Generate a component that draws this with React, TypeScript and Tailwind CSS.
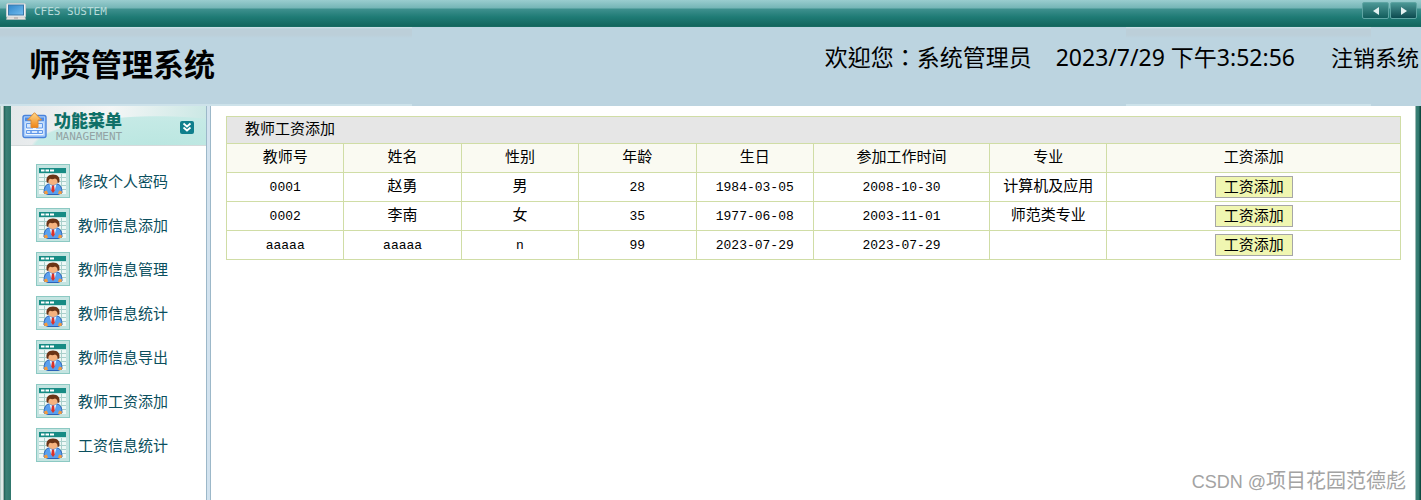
import React from 'react'

const menuItems = [
  '修改个人密码',
  '教师信息添加',
  '教师信息管理',
  '教师信息统计',
  '教师信息导出',
  '教师工资添加',
  '工资信息统计',
]

const columns = [
  { title: '教师号', width: 'w-[10%]' },
  { title: '姓名', width: 'w-[10%]' },
  { title: '性别', width: 'w-[10%]' },
  { title: '年龄', width: 'w-[10%]' },
  { title: '生日', width: 'w-[10%]' },
  { title: '参加工作时间', width: 'w-[15%]' },
  { title: '专业', width: 'w-[10%]' },
  { title: '工资添加', width: 'w-1/4' },
]

const teachers = [
  ['0001', '赵勇', '男', '28', '1984-03-05', '2008-10-30', '计算机及应用'],
  ['0002', '李南', '女', '35', '1977-06-08', '2003-11-01', '师范类专业'],
  ['aaaaa', 'aaaaa', 'n', '99', '2023-07-29', '2023-07-29', ''],
]

const MonitorIcon = () => (
  <svg width="20" height="17" viewBox="0 0 20 17" aria-hidden="true">
    <defs>
      <linearGradient id="screen" x1="0" y1="0" x2="1" y2="1">
        <stop offset="0" stopColor="#2f86c9" />
        <stop offset="1" stopColor="#74bdf0" />
      </linearGradient>
    </defs>
    <rect x="0.5" y="0.5" width="19" height="14" rx="1.5" fill="#eef1f2" stroke="#c4cdd0" />
    <rect x="2.5" y="2" width="15" height="10" fill="url(#screen)" stroke="#3b78a8" />
    <path d="M1 14h18l.5 2.5H.5z" fill="#e6e2e0" stroke="#b7bfc1" strokeWidth="0.6" />
    <path d="M8 15h4" stroke="#a39a98" />
  </svg>
)

const ManagementIcon = () => (
  <svg width="26" height="28" viewBox="0 0 26 28" aria-hidden="true">
    <defs>
      <linearGradient id="arrow" x1="0" y1="0" x2="0" y2="1">
        <stop offset="0" stopColor="#ffd98a" />
        <stop offset="1" stopColor="#ee8418" />
      </linearGradient>
    </defs>
    <rect x="1" y="3.500" width="23" height="22" rx="2" fill="#a9cdfa" stroke="#4a83dc" strokeWidth="1.4" />
    <path d="M3 5.500h19v3.500H3z" fill="#4f8de6" />
    <path d="M3.500 10.500h18v12.500h-18z" fill="#f1f7ff" />
    <path d="M4.500 11.500h6.500v4.500H4.500zM14 11.500h6.500v4.500H14zM4.500 18.500h4.500v3H4.500zM9 18.500h7v3H9zM16 18.500h4.500v3H16z" fill="#d7e8fd" stroke="#6299ea" />
    <path d="M12.500 .7l7 7.300H16v7.500H9V8H5.500z" fill="url(#arrow)" stroke="#dd8a35" />
  </svg>
)

const TeacherIcon = () => (
  <svg width="34" height="34" viewBox="0 0 34 34" aria-hidden="true" className="shrink-0">
    <rect x="0.5" y="0.5" width="33" height="33" fill="#c4e4e1" stroke="#8cc9c3" />
    <rect x="3" y="4" width="27" height="5" fill="#168b84" />
    <path d="M5 6.500h3.500M9.500 6.500H13M14 6.500h4" stroke="#fff" strokeWidth="2" />
    <path d="M3 10h27v20H3z" fill="#eef8f6" />
    <path d="M3 13.500h27M3 17.500h27M3 21.500h27M3 25.500h27M8.500 10v20M25.500 10v20" stroke="#a9cfcb" />
    <path d="M8 29c0-5 1.500-8.500 5-9h8c3.500 .5 5 4 5 9l-4 1.500H12z" fill="#5aa0ee" stroke="#2b62b8" />
    <path d="M13.500 20l3.500 2.500 3.500-2.500-2 7h-3z" fill="#e9f2fd" />
    <path d="M16 21.500h2l.8 5L17 29l-1.800-2.500z" fill="#d8322b" />
    <ellipse cx="17" cy="16.500" rx="5" ry="4.500" fill="#f6b27e" />
    <path d="M10.800 18.500C9.500 13.500 12 10.500 17 10.500s7.500 3 6.200 8l-1.700 .5c.3-3-1-4-2.500-4.500-1.500 .8-3.500 .8-5 .3-1.200 .7-1.800 2-1.500 4.200z" fill="#6b3416" />
    <path d="M8 27.500l3-1 1 3.500H8.500zM26 27.500l-3-1-1 3.500h3.500z" fill="#f59a3c" />
  </svg>
)

const ChevronsIcon = () => (
  <svg width="14" height="13" viewBox="0 0 14 13" aria-hidden="true">
    <rect width="14" height="13" rx="2" fill="#0f7f8c" />
    <path d="M3.500 2.500L7 5.500l3.500-3M3.500 6.500L7 9.500l3.500-3" fill="none" stroke="#fff" strokeWidth="1.800" />
  </svg>
)

const TopBar = () => (
  <div className="flex h-[27px] items-start justify-between border-b border-[#176b62] bg-[linear-gradient(#9acdcf_0px,#74b5b6_8px,#3e908e_9px,#1f7b75_17px,#13665e_26px)]">
    <div className="flex items-center gap-2 pt-[3px] pl-1.5">
      <MonitorIcon />
      <span className="font-['DejaVu_Sans_Mono',monospace] text-[11px] leading-4 text-[#b8dcdb]">CFES SUSTEM</span>
    </div>
    <div className="flex gap-px pt-0.5 pr-1">
      <button type="button" aria-label="后退" className="flex h-[17px] w-[27px] items-center justify-center rounded-xs border border-[#5ea5a3] bg-linear-to-b from-[#4b9896] to-[#0f5d5c]">
        <svg width="6" height="8" viewBox="0 0 6 8"><path d="M6 0v8L0 4z" fill="#e3f1f1" /></svg>
      </button>
      <button type="button" aria-label="前进" className="flex h-[17px] w-[27px] items-center justify-center rounded-xs border border-[#5ea5a3] bg-linear-to-b from-[#4b9896] to-[#0a4b50]">
        <svg width="6" height="8" viewBox="0 0 6 8"><path d="M0 0v8l6-4z" fill="#e3f1f1" /></svg>
      </button>
    </div>
  </div>
)

const Header = () => (
  <header className="flex h-[79px] items-start justify-between bg-[#bcd4e0] bg-[linear-gradient(#d0e4ea_0px,#bccfd9_2px,#bccfd9_8px,transparent_11px,transparent_77px,#cde2ea_77px),linear-gradient(#d0e4ea_0px,#bccfd9_2px,#bccfd9_8px,transparent_11px,transparent_77px,#cde2ea_77px)] bg-[position:left_top,right_50px_top] bg-[size:412px_100%,245px_100%] bg-no-repeat whitespace-nowrap text-black">
    <h1 className="pt-[15px] pl-[29px] text-[31px] leading-[44px] font-bold">师资管理系统</h1>
    <div className="flex items-start pt-3.5 pr-0.5 text-[23px] leading-8">
      <span className="font-['Noto_Sans','Noto_Sans_CJK_TC',sans-serif]">欢迎您：系统管理员</span>
      <span className="ml-6">2023/7/29 下午3:52:56</span>
      <a href="#" className="ml-9 text-[22px]">注销系统</a>
    </div>
  </header>
)

const Sidebar = () => (
  <aside className="w-[195px] shrink-0 bg-white">
    <div className="flex h-10 items-start border-b border-[#d5dadb] bg-[radial-gradient(ellipse_65%_85%_at_75%_110%,#b9e6e0_0%,#c6eae6_97%,transparent_100%),linear-gradient(100deg,#e4e8ea,#f4f6f6_50%,#c9e7e4)] pt-1.5 pr-3 pl-[11px]">
      <ManagementIcon />
      <div className="ml-1.5 flex-1">
        <h2 className="text-[17px] leading-[18px] font-black text-[#0f7068]">功能菜单</h2>
        <p className="pt-px pl-0.5 font-['DejaVu_Sans_Mono',monospace] text-[11px] leading-3 text-[#93a3a4]">MANAGEMENT</p>
      </div>
      <button type="button" aria-label="折叠菜单" className="mt-[9px]">
        <ChevronsIcon />
      </button>
    </div>
    <nav className="pt-[18px]">
      <ul className="flex flex-col gap-2.5 pl-[25px]">
        {menuItems.map((item) => (
          <li key={item}>
            <a href="#" className="flex items-center gap-2 text-[15px] leading-5 text-[#0b4f5e]">
              <TeacherIcon />
              {item}
            </a>
          </li>
        ))}
      </ul>
    </nav>
  </aside>
)

const SalaryTable = () => (
  <table className="w-full table-fixed border-collapse text-center font-['Liberation_Mono','Noto_Sans_CJK_SC',monospace] text-[15px] leading-5 text-black">
    <colgroup>
      {columns.map((col) => (
        <col key={col.title} className={col.width} />
      ))}
    </colgroup>
    <thead>
      <tr className="h-[27px] bg-[#e6e6e6]">
        <th colSpan={8} className="border border-[#d0dda6] pt-0.5 pl-[18px] text-left font-normal">教师工资添加</th>
      </tr>
      <tr className="h-[29px] bg-[#fafaf2]">
        {columns.map((col) => (
          <th key={col.title} className="border border-[#d0dda6] pt-0.5 font-normal">{col.title}</th>
        ))}
      </tr>
    </thead>
    <tbody>
      {teachers.map((row) => (
        <tr key={row[0]} className="h-[29px]">
          {row.map((cell, i) => (
            <td key={i} className={`border border-[#d0dda6] pt-0.5 ${/^[\w-]+$/.test(cell) ? 'text-[13px]' : ''}`}>{cell}</td>
          ))}
          <td className="border border-[#d0dda6]">
            <button type="button" className="mx-auto block h-[22px] border border-[#a6a6a6] bg-[#f0f6b1] px-2 pt-0.5 leading-5">工资添加</button>
          </td>
        </tr>
      ))}
    </tbody>
  </table>
)

const App = () => {
  return (
    <div className="relative flex min-h-screen flex-col bg-white font-['Noto_Sans','Noto_Sans_CJK_SC',sans-serif]">
      <TopBar />
      <Header />
      <div className="flex flex-1">
        <div className="w-[11px] shrink-0 bg-[linear-gradient(90deg,#8fb5ae_0px,#dfeae8_1px,#dfeae8_3px,#9cb0ad_3px,#9cb0ad_4px,#1e5e55_4px,#3b8177_6px,#2f766c_11px)]" />
        <Sidebar />
        <div className="w-[5px] shrink-0 border-x border-[#9cb8c9] bg-[#d3e3ef]" />
        <main className="min-w-0 flex-1 pt-2.5 pr-3.5 pl-[15px]">
          <SalaryTable />
        </main>
        <div className="w-[6px] shrink-0 bg-[linear-gradient(90deg,#9db9b4_0px,#9db9b4_1px,#3b8177_1px,#2f766c_4px,#0d4a41_5px)]" />
      </div>
      <p className="absolute right-[15px] bottom-1 font-['Liberation_Sans','Noto_Sans_CJK_SC',sans-serif] text-[20px] leading-7 text-[#a3a3a3]">
        <span className="text-lg">CSDN @</span>项目花园范德彪
      </p>
    </div>
  )
}

export default App
